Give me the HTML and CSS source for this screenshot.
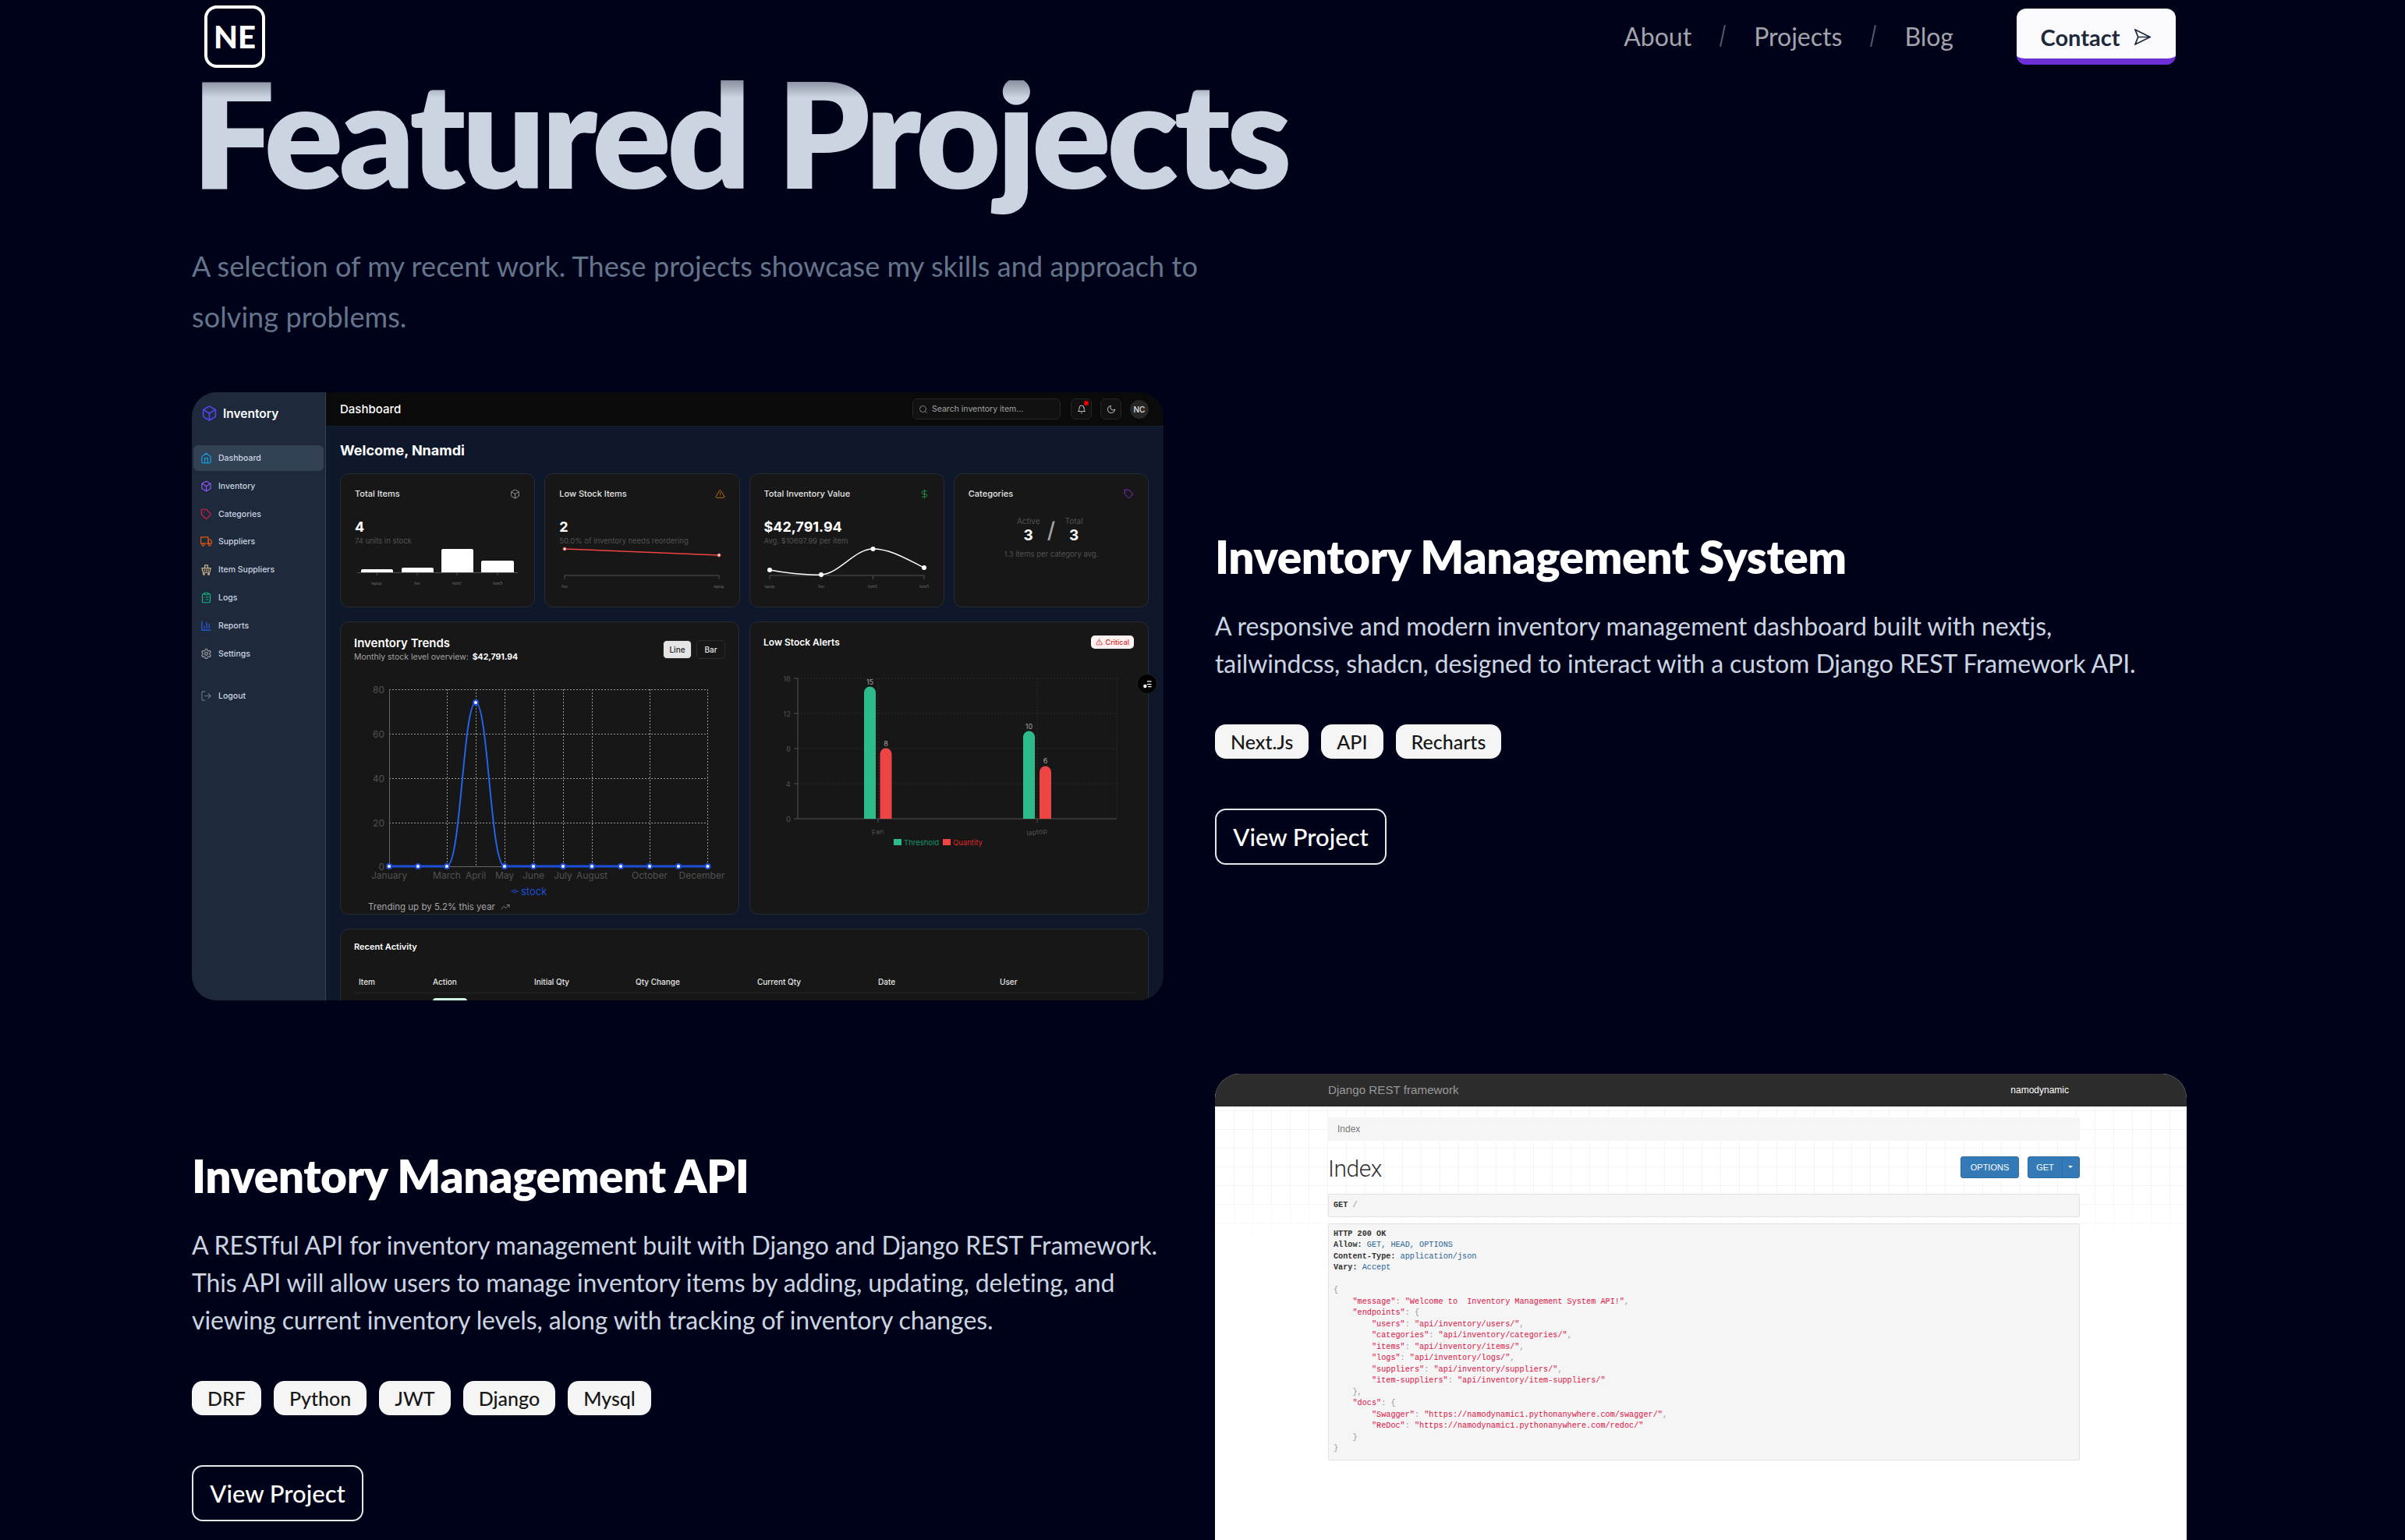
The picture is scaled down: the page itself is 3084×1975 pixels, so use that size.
FILE: index.html
```html
<!DOCTYPE html>
<html lang="en">
<head>
    <meta charset="UTF-8">
    <meta name="viewport" content="width=device-width, initial-scale=1.0">
    <title>Featured Projects</title>
    <link rel="stylesheet" href="styles.css">
</head>
<body>
    <svg class="sprite" width="0" height="0">
        <symbol id="i-home" viewBox="0 0 24 24"><path d="M3 9l9-7 9 7v11a2 2 0 0 1-2 2H5a2 2 0 0 1-2-2z"/><path d="M9 22V12h6v10"/></symbol>
        <symbol id="i-box" viewBox="0 0 24 24"><path d="M21 16V8a2 2 0 0 0-1-1.73l-7-4a2 2 0 0 0-2 0l-7 4A2 2 0 0 0 3 8v8a2 2 0 0 0 1 1.73l7 4a2 2 0 0 0 2 0l7-4A2 2 0 0 0 21 16z"/><path d="M3.27 6.96 12 12.01l8.73-5.05"/><path d="M12 22.08V12"/></symbol>
        <symbol id="i-tag" viewBox="0 0 24 24"><path d="M20.59 13.41l-7.17 7.17a2 2 0 0 1-2.83 0L2 12V2h10l8.59 8.59a2 2 0 0 1 0 2.82z"/><path d="M7 7h.01"/></symbol>
        <symbol id="i-truck" viewBox="0 0 24 24"><path d="M1 3h15v13H1z"/><path d="M16 8h4l3 3v5h-7z"/><circle cx="5.5" cy="18.5" r="2.5"/><circle cx="18.5" cy="18.5" r="2.5"/></symbol>
        <symbol id="i-basket" viewBox="0 0 24 24"><path d="M3 9h18l-2 9H5z"/><path d="M9 9V3h6v6"/><path d="M8 12v3M12 12v3M16 12v3"/><circle cx="7" cy="21" r="1.5"/><circle cx="17" cy="21" r="1.5"/></symbol>
        <symbol id="i-clip" viewBox="0 0 24 24"><rect x="8" y="2" width="8" height="4" rx="1"/><path d="M16 4h2a2 2 0 0 1 2 2v14a2 2 0 0 1-2 2H6a2 2 0 0 1-2-2V6a2 2 0 0 1 2-2h2"/><path d="M12 11h4M12 16h4M8 11h.01M8 16h.01"/></symbol>
        <symbol id="i-chart" viewBox="0 0 24 24"><path d="M3 3v18h18"/><path d="M8 17v-4M13 17V5M18 17V8"/></symbol>
        <symbol id="i-gear" viewBox="0 0 24 24"><path d="M12.22 2h-.44a2 2 0 0 0-2 2v.18a2 2 0 0 1-1 1.73l-.43.25a2 2 0 0 1-2 0l-.15-.08a2 2 0 0 0-2.73.73l-.22.38a2 2 0 0 0 .73 2.73l.15.1a2 2 0 0 1 1 1.72v.51a2 2 0 0 1-1 1.74l-.15.09a2 2 0 0 0-.73 2.73l.22.38a2 2 0 0 0 2.73.73l.15-.08a2 2 0 0 1 2 0l.43.25a2 2 0 0 1 1 1.73V20a2 2 0 0 0 2 2h.44a2 2 0 0 0 2-2v-.18a2 2 0 0 1 1-1.73l.43-.25a2 2 0 0 1 2 0l.15.08a2 2 0 0 0 2.73-.73l.22-.39a2 2 0 0 0-.73-2.73l-.15-.08a2 2 0 0 1-1-1.74v-.5a2 2 0 0 1 1-1.74l.15-.09a2 2 0 0 0 .73-2.73l-.22-.38a2 2 0 0 0-2.73-.73l-.15.08a2 2 0 0 1-2 0l-.43-.25a2 2 0 0 1-1-1.73V4a2 2 0 0 0-2-2z"/><circle cx="12" cy="12" r="3"/></symbol>
        <symbol id="i-logout" viewBox="0 0 24 24"><path d="M9 21H5a2 2 0 0 1-2-2V5a2 2 0 0 1 2-2h4"/><path d="M16 17l5-5-5-5"/><path d="M21 12H9"/></symbol>
        <symbol id="i-bell" viewBox="0 0 24 24"><path d="M18 8A6 6 0 0 0 6 8c0 7-3 9-3 9h18s-3-2-3-9"/><path d="M13.73 21a2 2 0 0 1-3.46 0"/></symbol>
        <symbol id="i-moon" viewBox="0 0 24 24"><path d="M21 12.79A9 9 0 1 1 11.21 3 7 7 0 0 0 21 12.79z"/></symbol>
        <symbol id="i-search" viewBox="0 0 24 24"><circle cx="11" cy="11" r="8"/><path d="m21 21-4.35-4.35"/></symbol>
        <symbol id="i-dollar" viewBox="0 0 24 24"><path d="M12 2v20"/><path d="M17 5H9.5a3.5 3.5 0 0 0 0 7h5a3.5 3.5 0 0 1 0 7H6"/></symbol>
        <symbol id="i-alert" viewBox="0 0 24 24"><path d="m21.73 18-8-14a2 2 0 0 0-3.48 0l-8 14A2 2 0 0 0 4 21h16a2 2 0 0 0 1.73-3Z"/><path d="M12 9v4M12 17h.01"/></symbol>
        <symbol id="i-send" viewBox="0 0 24 24"><path d="M2 2l20 10L2 22l4-10z"/><path d="M6 12h16"/></symbol>
        <symbol id="i-trend" viewBox="0 0 24 24"><path d="m22 7-8.5 8.5-5-5L2 17"/><path d="M16 7h6v6"/></symbol>
    </svg>

    <header class="topbar">
        <a class="logo">NE</a>
        <nav class="toplinks">
            <a>About</a><span class="slash"></span>
            <a>Projects</a><span class="slash"></span>
            <a>Blog</a>
        </nav>
        <a class="contact">Contact <svg class="ico contact-ico"><use href="#i-send"/></svg></a>
    </header>

    <main class="page">
        <h1 class="page-title">Featured Projects</h1>
        <p class="page-lead">A selection of my recent work. These projects showcase my skills and approach to solving problems.</p>

        <section class="project">
            <div class="shot dash">
                <aside class="side">
                    <div class="side-brand"><svg class="ico brand-ico"><use href="#i-box"/></svg>Inventory</div>
                    <a class="side-link active"><svg class="ico c-sky"><use href="#i-home"/></svg>Dashboard</a>
                    <a class="side-link"><svg class="ico c-violet"><use href="#i-box"/></svg>Inventory</a>
                    <a class="side-link"><svg class="ico c-rose"><use href="#i-tag"/></svg>Categories</a>
                    <a class="side-link"><svg class="ico c-orange"><use href="#i-truck"/></svg>Suppliers</a>
                    <a class="side-link"><svg class="ico c-tan"><use href="#i-basket"/></svg>Item Suppliers</a>
                    <a class="side-link"><svg class="ico c-green"><use href="#i-clip"/></svg>Logs</a>
                    <a class="side-link"><svg class="ico c-blue"><use href="#i-chart"/></svg>Reports</a>
                    <a class="side-link"><svg class="ico c-grey"><use href="#i-gear"/></svg>Settings</a>
                    <a class="side-link logout"><svg class="ico c-dim"><use href="#i-logout"/></svg>Logout</a>
                </aside>
                <div class="dash-main">
                    <div class="dash-head">
                        <span class="dash-head-title">Dashboard</span>
                        <div class="dash-search"><svg class="ico"><use href="#i-search"/></svg>Search inventory item...</div>
                        <span class="dash-btn bell"><svg class="ico"><use href="#i-bell"/></svg></span>
                        <span class="dash-btn"><svg class="ico"><use href="#i-moon"/></svg></span>
                        <span class="avatar">NC</span>
                    </div>
                    <div class="dash-body">
                        <h3 class="welcome">Welcome, Nnamdi</h3>
                        <div class="stats">
                            <div class="card stat">
                                <div class="stat-head"><span>Total Items</span><svg class="ico c-grey"><use href="#i-box"/></svg></div>
                                <div class="stat-num">4</div>
                                <div class="stat-sub">74 units in stock</div>
                                <svg class="spark" width="250" height="60">
                                    <path d="M27 34v-2a2 2 0 0 1 2-2h37a2 2 0 0 1 2 2v2zM79 34v-4a2 2 0 0 1 2-2h37a2 2 0 0 1 2 2v4zM130 34V6a2 2 0 0 1 2-2h37a2 2 0 0 1 2 2v28zM181 34V21a2 2 0 0 1 2-2h38a2 2 0 0 1 2 2v13z" fill="#fff"/>
                                    <path d="M22 34.5h206M47.5 34v4M99 34v4M150 34v4M202 34v4" stroke="#525252"/>
                                    <g class="tiny"><text x="47" y="50">laptop</text><text x="99" y="50">Fan</text><text x="150" y="50">Item2</text><text x="202" y="50">Item3</text></g>
                                </svg>
                            </div>
                            <div class="card stat">
                                <div class="stat-head"><span>Low Stock Items</span><svg class="ico c-amber"><use href="#i-alert"/></svg></div>
                                <div class="stat-num">2</div>
                                <div class="stat-sub">50.0% of inventory needs reordering</div>
                                <svg class="spark" width="250" height="60">
                                    <path d="M26 4L224 12" stroke="#ef4444" stroke-width="1.5" fill="none"/>
                                    <circle cx="26" cy="4" r="2" fill="#fff" stroke="#ef4444"/><circle cx="224" cy="12" r="2" fill="#fff" stroke="#ef4444"/>
                                    <path d="M26 43v-5h198v5" stroke="#525252" fill="none"/>
                                    <g class="tiny"><text x="26" y="54">Fan</text><text x="224" y="54">laptop</text></g>
                                </svg>
                            </div>
                            <div class="card stat">
                                <div class="stat-head"><span>Total Inventory Value</span><svg class="ico c-green2"><use href="#i-dollar"/></svg></div>
                                <div class="stat-num">$42,791.94</div>
                                <div class="stat-sub">Avg. $10697.99 per item</div>
                                <svg class="spark" width="250" height="60">
                                    <path d="M26 43v-5h198v5M92 38v5M158.500 38v5" stroke="#525252" fill="none"/>
                                    <path d="M26 31C48 35 70 38 92 37C115 36 135 4 158.500 4C182 4 203 18 224 28" stroke="#fff" stroke-width="1.500" fill="none"/>
                                    <circle cx="26" cy="31" r="3" fill="#fff"/><circle cx="92" cy="37" r="3" fill="#fff"/><circle cx="158.500" cy="4" r="3" fill="#fff"/><circle cx="224" cy="28" r="3" fill="#fff"/>
                                    <g class="tiny"><text x="26" y="54">laptop</text><text x="92" y="54">Fan</text><text x="158" y="54">Item2</text><text x="224" y="54">Item3</text></g>
                                </svg>
                            </div>
                            <div class="card stat">
                                <div class="stat-head"><span>Categories</span><svg class="ico c-purple"><use href="#i-tag"/></svg></div>
                                <div class="cat-row">
                                    <div class="cat-col"><span>Active</span><b>3</b></div>
                                    <i class="cat-slash">/</i>
                                    <div class="cat-col"><span>Total</span><b>3</b></div>
                                </div>
                                <div class="cat-note">1.3 items per category avg.</div>
                            </div>
                        </div>
                        <div class="charts">
                            <div class="card chart">
                                <div class="trend-head">
                                    <div>
                                        <div class="chart-title">Inventory Trends</div>
                                        <div class="chart-sub">Monthly stock level overview: <b>$42,791.94</b></div>
                                    </div>
                                    <div class="toggle"><span class="on">Line</span><span>Bar</span></div>
                                </div>
                                <svg class="trend-svg" width="510" height="300">
                                    <g class="grid-major">
                                        <path d="M63 14.500H471.500M63 71.500H471.500M63 128.500H471.500M63 185.500H471.500"/>
                                        <path d="M137.500 14V241M174.500 14V241M211.500 14V241M248.500 14V241M286.500 14V241M323.500 14V241M397.500 14V241M471.500 14V241"/>
                                    </g>
                                    <path d="M63.500 14V241.500H471.500" stroke="#666" fill="none"/>
                                    <g class="axis-y"><text x="57" y="19">80</text><text x="57" y="76">60</text><text x="57" y="133">40</text><text x="57" y="190">20</text><text x="57" y="246">0</text></g>
                                    <g class="axis-x"><text x="63" y="257">January</text><text x="137" y="257">March</text><text x="174" y="257">April</text><text x="211" y="257">May</text><text x="248" y="257">June</text><text x="286" y="257">July</text><text x="323" y="257">August</text><text x="397" y="257">October</text><text x="464" y="257">December</text></g>
                                    <path d="M137 241C155 241 158 31 174 31C190 31 193 241 211 241" stroke="#2563eb" stroke-width="2" fill="none"/>
                                    <path d="M63 241H137M211 241H471.500" stroke="#1d4ed8" stroke-width="3" fill="none"/>
                                    <g fill="#fff" stroke="#1d4ed8" stroke-width="2">
                                        <circle cx="63" cy="241" r="3"/><circle cx="100" cy="241" r="3"/><circle cx="137" cy="241" r="3"/><circle cx="174" cy="31" r="3"/><circle cx="211" cy="241" r="3"/><circle cx="248" cy="241" r="3"/><circle cx="286" cy="241" r="3"/><circle cx="323" cy="241" r="3"/><circle cx="360" cy="241" r="3"/><circle cx="397" cy="241" r="3"/><circle cx="434" cy="241" r="3"/><circle cx="471.500" cy="241" r="3"/>
                                    </g>
                                    <path d="M219 273h10" stroke="#1d4ed8"/><circle cx="224" cy="273" r="2" fill="#171717" stroke="#1d4ed8"/>
                                    <text class="legend-blue" x="232" y="278">stock</text>
                                </svg>
                                <div class="trend-foot">Trending up by 5.2% this year <svg class="ico"><use href="#i-trend"/></svg></div>
                            </div>
                            <div class="card chart">
                                <div class="alert-head">
                                    <div class="chart-title small">Low Stock Alerts</div>
                                    <span class="badge"><svg class="ico"><use href="#i-alert"/></svg>Critical</span>
                                </div>
                                <svg class="alert-svg" width="509" height="260">
                                    <path class="grid-minor" d="M62 19H471M62 64H471M62 109H471M62 154H471M165 19V199M369 19V199M471 19V199"/>
                                    <path d="M62 19V199H471M57 19H62M57 64H62M57 109H62M57 154H62M57 199H62M165 199V204M369 199V204" stroke="#525252" fill="none"/>
                                    <path d="M147 199V37a7 7 0 0 1 15 0V199zM351 199V94a7 7 0 0 1 15 0V199z" fill="#2ebb8b"/>
                                    <path d="M167.500 199V116a7 7 0 0 1 15 0V199zM372 199V139a7 7 0 0 1 15 0V199z" fill="#ef4444"/>
                                    <g class="bar-y"><text x="53" y="23">16</text><text x="53" y="68">12</text><text x="53" y="113">8</text><text x="53" y="158">4</text><text x="53" y="203">0</text></g>
                                    <g class="bar-val"><text x="154.500" y="27">15</text><text x="175" y="106">8</text><text x="358.500" y="84">10</text><text x="379.500" y="128">6</text></g>
                                    <text class="bar-x" x="165" y="219" transform="rotate(-8 165 219)">Fan</text>
                                    <text class="bar-x" x="369" y="219" transform="rotate(-8 369 219)">laptop</text>
                                    <rect x="185" y="225" width="10" height="8" fill="#2ebb8b"/><text class="leg-g" x="198" y="233">Threshold</text>
                                    <rect x="248" y="225" width="10" height="8" fill="#ef4444"/><text class="leg-r" x="261" y="233">Quantity</text>
                                </svg>
                            </div>
                        </div>
                        <div class="card activity">
                            <div class="activity-title">Recent Activity</div>
                            <div class="activity-cols"><span>Item</span><span>Action</span><span>Initial Qty</span><span>Qty Change</span><span>Current Qty</span><span>Date</span><span>User</span></div>
                            <div class="activity-row"><span></span><span class="activity-pill"></span></div>
                        </div>
                    </div>
                    <span class="float-btn"><svg viewBox="0 0 24 24"><path d="M11 6h9M11 12h9M13 17h7"/><circle cx="7" cy="16" r="2.500" fill="#fff"/></svg></span>
                </div>
            </div>
            <div class="info">
                <h2>Inventory Management System</h2>
                <p>A responsive and modern inventory management dashboard built with nextjs,<br>tailwindcss, shadcn, designed to interact with a custom Django REST Framework API.</p>
                <div class="tags"><span>Next.Js</span><span>API</span><span>Recharts</span></div>
                <a class="view-btn">View Project</a>
            </div>
        </section>

        <section class="project">
            <div class="info">
                <h2>Inventory Management API</h2>
                <p>A RESTful API for inventory management built with Django and Django REST Framework. This API will allow users to manage inventory items by adding, updating, deleting, and viewing current inventory levels, along with tracking of inventory changes.</p>
                <div class="tags"><span>DRF</span><span>Python</span><span>JWT</span><span>Django</span><span>Mysql</span></div>
                <a class="view-btn">View Project</a>
            </div>
            <div class="shot api">
                <div class="api-nav"><span>Django REST framework</span><span class="api-user">namodynamic</span></div>
                <div class="api-body">
                    <div class="api-crumb">Index</div>
                    <div class="api-title-row">
                        <span class="api-title">Index</span>
                        <span class="api-btn">OPTIONS</span>
                        <span class="api-btn get"><span>GET</span><i></i></span>
                    </div>
                    <div class="api-req"><b>GET</b> <em>/</em></div>
                    <pre class="api-res"><b>HTTP 200 OK</b>
<b>Allow:</b> <span class="lit">GET, HEAD, OPTIONS</span>
<b>Content-Type:</b> <span class="lit">application/json</span>
<b>Vary:</b> <span class="lit">Accept</span>

<em>{</em>
    <span class="str">"message"</span><em>:</em> <span class="str">"Welcome to  Inventory Management System API!"</span><em>,</em>
    <span class="str">"endpoints"</span><em>: {</em>
        <span class="str">"users"</span><em>:</em> <span class="str">"api/inventory/users/"</span><em>,</em>
        <span class="str">"categories"</span><em>:</em> <span class="str">"api/inventory/categories/"</span><em>,</em>
        <span class="str">"items"</span><em>:</em> <span class="str">"api/inventory/items/"</span><em>,</em>
        <span class="str">"logs"</span><em>:</em> <span class="str">"api/inventory/logs/"</span><em>,</em>
        <span class="str">"suppliers"</span><em>:</em> <span class="str">"api/inventory/suppliers/"</span><em>,</em>
        <span class="str">"item-suppliers"</span><em>:</em> <span class="str">"api/inventory/item-suppliers/"</span>
    <em>},</em>
    <span class="str">"docs"</span><em>: {</em>
        <span class="str">"Swagger"</span><em>:</em> <span class="str">"https://namodynamic1.pythonanywhere.com/swagger/"</span><em>,</em>
        <span class="str">"ReDoc"</span><em>:</em> <span class="str">"https://namodynamic1.pythonanywhere.com/redoc/"</span>
    <em>}</em>
<em>}</em></pre>
                </div>
            </div>
        </section>
    </main>
</body>
</html>
```

FILE: styles.css
```css
* {
    box-sizing: border-box;
}
html, body {
    margin: 0;
    height: 1975px;
    overflow: hidden;
}
body {
    background: #00021a;
    color: #fff;
    font-family: "Lato", sans-serif;
    position: relative;
}
.sprite {
    position: absolute;
}
.ico {
    width: 14px;
    height: 14px;
    fill: none;
    stroke: currentColor;
    stroke-width: 2;
    stroke-linecap: round;
    stroke-linejoin: round;
    flex: none;
}

/* top bar */
.topbar {
    position: absolute;
    top: 0;
    left: 0;
    right: 0;
    height: 103px;
    background: #00021a;
    z-index: 5;
    display: flex;
    align-items: flex-start;
    padding: 0 294px 0 262px;
}
.topbar::after {
    content: "";
    position: absolute;
    top: 100%;
    left: 0;
    right: 0;
    height: 22px;
    background: linear-gradient(#00021a55, #00021a00);
}
.logo {
    width: 78px;
    height: 80px;
    margin-top: 7px;
    border: 4px solid #fff;
    border-radius: 16px;
    display: flex;
    align-items: center;
    justify-content: center;
    font-size: 40px;
    font-weight: 900;
}
.toplinks {
    margin-left: auto;
    display: flex;
    align-items: center;
    height: 92px;
    font-size: 32px;
    color: #a3a3ad;
}
.slash {
    width: 2px;
    height: 28px;
    margin: 0 39px;
    background: #55586a;
    transform: rotate(12deg);
}
.contact {
    margin: 11px 0 0 81px;
    width: 204px;
    height: 72px;
    padding-top: 8px;
    background: #fafafc;
    border-bottom: 8px solid #6d2fd6;
    border-radius: 12px;
    color: #1e293b;
    font-size: 29px;
    font-weight: 700;
    display: flex;
    align-items: center;
    justify-content: center;
    gap: 18px;
}
.contact-ico {
    width: 23px;
    height: 23px;
    stroke-width: 1.800;
}

/* page */
.page {
    padding: 94px 280px 0 246px;
}
.page-title {
    margin: 0;
    font-size: 188px;
    font-weight: 800;
    line-height: 150px;
    letter-spacing: -5.200px;
    color: #cbd5e1;
}
.page-lead {
    width: 1320px;
    margin: 65px 0 0;
    font-size: 36px;
    line-height: 65px;
    letter-spacing: 0.080px;
    color: #64748b;
}
.project {
    display: grid;
    grid-template-columns: 1246px 1246px;
    gap: 66px;
    align-items: center;
    margin-top: 94px;
}
.project:first-of-type {
    margin-top: 64px;
}
.project + .project {
    align-items: start;
}
.project + .project .shot {
    height: 672px;
}
.project + .project .info {
    margin-top: 95px;
}
.info h2 {
    margin: 0;
    font-size: 58.500px;
    line-height: 71px;
    letter-spacing: -0.400px;
    font-weight: 800;
}
.info p {
    margin: 30px 0 0;
    font-size: 32px;
    line-height: 48px;
    letter-spacing: -0.100px;
    color: #cbd5e1;
}
.tags {
    display: flex;
    gap: 16px;
    margin-top: 54px;
}
.tags span {
    height: 44px;
    padding: 0 20px;
    display: flex;
    align-items: center;
    background: #f5f5f5;
    color: #171717;
    border-radius: 14px;
    font-size: 25px;
    font-weight: 500;
}
.view-btn {
    display: flex;
    align-items: center;
    justify-content: center;
    width: 220px;
    height: 72px;
    margin-top: 64px;
    border: 2px solid #e5e7eb;
    border-radius: 14px;
    font-size: 31px;
    font-weight: 500;
}
.shot {
    overflow: hidden;
    border-radius: 32px;
}

/* inventory dashboard screenshot */
.dash {
    height: 780px;
    display: grid;
    grid-template-columns: 172px minmax(0, 1fr);
    font-family: "Inter", sans-serif;
    background: #0f172a;
}
.side {
    background: #1e293b;
    border-right: 1px solid #334155;
    padding: 0 2px;
    color: #cbd5e1;
}
.side-brand {
    display: flex;
    align-items: center;
    gap: 7px;
    height: 50px;
    margin-top: 2px;
    margin-bottom: 16px;
    padding-left: 10px;
    font-size: 15.500px;
    font-weight: 600;
    color: #fff;
}
.brand-ico {
    width: 21px;
    height: 24px;
    color: #4f46e5;
}
.side-link {
    display: flex;
    align-items: center;
    gap: 8px;
    height: 33px;
    margin-bottom: 2.800px;
    padding-left: 9px;
    border-radius: 6px;
    font-size: 10.500px;
    font-weight: 500;
}
.side-link .ico {
    width: 15px;
    height: 15px;
    stroke-width: 1.800;
}
.side-link.active {
    background: #334155;
}
.side-link.logout {
    margin-top: 21px;
}
.c-sky { color: #0ea5e9; }
.c-violet { color: #8b5cf6; }
.c-rose { color: #e11d48; }
.c-orange { color: #ea580c; }
.c-tan { color: #d6b98c; }
.c-green { color: #10b981; }
.c-blue { color: #2563eb; }
.c-grey { color: #a3a3a3; }
.c-dim { color: #64748b; }
.c-amber { color: #d97706; }
.c-green2 { color: #16a34a; }
.c-purple { color: #9333ea; }

.dash-main {
    position: relative;
    min-width: 0;
}
.dash-head {
    height: 44px;
    background: #0a0a0a;
    border-bottom: 1px solid #171f2e;
    display: flex;
    align-items: center;
    padding-left: 18px;
    color: #e5e5e5;
}
.dash-head-title {
    margin-right: auto;
    font-size: 15px;
    font-weight: 500;
    color: #fff;
}
.dash-search {
    width: 190px;
    height: 27px;
    margin-right: 13px;
    padding-left: 7px;
    display: flex;
    align-items: center;
    gap: 5px;
    border: 1px solid #262626;
    border-radius: 6px;
    background: #111;
    color: #a3a3a3;
    font-size: 10.500px;
}
.dash-search .ico {
    width: 12px;
    height: 12px;
    stroke-width: 1.500;
}
.dash-btn {
    position: relative;
    width: 27px;
    height: 27px;
    margin-right: 11px;
    border: 1px solid #262626;
    border-radius: 6px;
    background: #111;
    display: flex;
    align-items: center;
    justify-content: center;
}
.dash-btn .ico {
    width: 12px;
    height: 12px;
    stroke-width: 1.700;
}
.bell::after {
    content: "";
    position: absolute;
    top: 2px;
    right: 3px;
    width: 6px;
    height: 6px;
    border-radius: 50%;
    background: #ef0000;
}
.avatar {
    width: 24px;
    height: 24px;
    margin-right: 19px;
    border-radius: 50%;
    background: #262626;
    display: flex;
    align-items: center;
    justify-content: center;
    font-size: 10px;
    font-weight: 500;
}
.dash-body {
    padding: 0 19px 0 18px;
}
.welcome {
    margin: 0;
    height: 60px;
    line-height: 62px;
    font-size: 18px;
    font-weight: 700;
}
.card {
    background: #171717;
    border: 1px solid #252a33;
    border-radius: 11px;
}
.stats {
    display: grid;
    grid-template-columns: repeat(4, minmax(0, 1fr));
    gap: 12px;
}
.stat {
    height: 172px;
    padding: 18px 18px;
}
.stat-head {
    display: flex;
    justify-content: space-between;
    align-items: center;
    height: 14px;
    font-size: 11px;
    font-weight: 500;
    color: #e5e5e5;
}
.stat-head .ico {
    width: 13px;
    height: 13px;
    stroke-width: 1.600;
}
.stat-num {
    margin-top: 25px;
    font-size: 18px;
    line-height: 22px;
    font-weight: 700;
}
.stat-sub {
    font-size: 9.500px;
    line-height: 14px;
    color: #525252;
}
.spark {
    display: block;
    margin: -1px 0 0 -19px;
    overflow: visible;
}
.tiny text {
    font-size: 4.500px;
    fill: #737373;
    text-anchor: middle;
}
.cat-row {
    display: flex;
    justify-content: center;
    gap: 5px;
    margin-top: 21px;
}
.cat-col {
    display: flex;
    flex-direction: column;
    align-items: center;
    width: 38px;
}
.cat-col span {
    font-size: 10px;
    line-height: 14px;
    color: #525252;
}
.cat-col b {
    font-size: 19px;
    line-height: 24px;
}
.cat-slash {
    align-self: center;
    font-size: 28px;
    font-weight: 500;
    font-style: normal;
    color: #a3a3a3;
}
.cat-note {
    margin-top: 6px;
    text-align: center;
    font-size: 9.500px;
    color: #525252;
}
.charts {
    display: grid;
    grid-template-columns: repeat(2, minmax(0, 1fr));
    gap: 13px;
    margin-top: 18px;
}
.chart {
    height: 376px;
    position: relative;
}
.trend-head {
    display: flex;
    justify-content: space-between;
    padding: 17px 17px 0 17px;
    height: 72px;
}
.chart-title {
    font-size: 15px;
    line-height: 20px;
    font-weight: 600;
}
.chart-title.small {
    font-size: 12px;
}
.chart-sub {
    font-size: 10.500px;
    line-height: 16px;
    color: #a3a3a3;
}
.chart-sub b {
    margin-left: 2px;
    color: #fff;
}
.toggle {
    display: flex;
    gap: 6px;
    margin-top: 6px;
    height: 24px;
}
.toggle span {
    width: 37px;
    border: 1px solid #2a2a2a;
    border-radius: 5px;
    display: flex;
    align-items: center;
    justify-content: center;
    font-size: 10px;
    font-weight: 500;
    color: #e5e5e5;
}
.toggle .on {
    background: #e5e5e5;
    color: #262626;
}
.trend-svg {
    display: block;
    margin-left: -1px;
    overflow: visible;
}
.grid-major path {
    stroke: #9a9a9a;
    stroke-dasharray: 2 2;
    fill: none;
}
.axis-y text {
    font-size: 12px;
    fill: #525252;
    text-anchor: end;
}
.axis-x text {
    font-size: 12px;
    fill: #525252;
    text-anchor: middle;
}
.legend-blue {
    font-size: 13px;
    fill: #1d4ed8;
}
.trend-foot {
    position: absolute;
    left: 35px;
    top: 358px;
    display: flex;
    align-items: center;
    gap: 7px;
    font-size: 11.500px;
    color: #a3a3a3;
}
.trend-foot .ico {
    width: 12px;
    height: 12px;
    stroke-width: 1.500;
}
.alert-head {
    display: flex;
    justify-content: space-between;
    align-items: flex-start;
    padding: 17px 18px 0 17px;
    height: 53px;
}
.alert-head .chart-title {
    line-height: 17px;
}
.badge {
    display: flex;
    align-items: center;
    gap: 4px;
    height: 17px;
    padding: 0 6px;
    background: #fef2f2;
    border-radius: 5px;
    color: #dc2626;
    font-size: 9px;
    font-weight: 500;
}
.badge .ico {
    width: 9px;
    height: 9px;
}
.alert-svg {
    display: block;
    margin-left: -1px;
    overflow: visible;
}
.grid-minor {
    stroke: #2c2c2c;
    stroke-dasharray: 2 2;
    fill: none;
}
.bar-y text {
    font-size: 9.500px;
    fill: #525252;
    text-anchor: end;
}
.bar-val text {
    font-size: 9px;
    fill: #a3a3a3;
    text-anchor: middle;
}
.bar-x {
    font-size: 9px;
    fill: #525252;
    text-anchor: middle;
}
.leg-g {
    font-size: 9.500px;
    fill: #15936a;
}
.leg-r {
    font-size: 9.500px;
    fill: #dc2626;
}
.activity {
    height: 120px;
    margin-top: 18px;
    padding: 0 17px;
}
.activity-title {
    height: 24px;
    margin-top: 10px;
    line-height: 24px;
    font-size: 11px;
    font-weight: 600;
}
.activity-cols,
.activity-row {
    display: grid;
    grid-template-columns: 95px 130px 130px 156px 155px 156px 1fr;
    padding-left: 6px;
}
.activity-cols {
    height: 48px;
    padding-top: 25px;
    line-height: 16px;
    border-bottom: 1px solid #262626;
    font-size: 10px;
    font-weight: 500;
    color: #e5e5e5;
}
.activity-row {
    padding-top: 6px;
}
.activity-pill {
    width: 44px;
    height: 10px;
    background: #d1fae5;
    border-radius: 4px;
}
.float-btn {
    position: absolute;
    top: 361px;
    right: 8px;
    width: 26px;
    height: 26px;
    border-radius: 50%;
    background: #000;
    border: 1px solid #222;
    display: flex;
    align-items: center;
    justify-content: center;
}
.float-btn svg {
    width: 15px;
    height: 15px;
    fill: none;
    stroke: #fff;
    stroke-width: 2;
}

/* django rest framework screenshot */
.api {
    background: #fff;
    font-family: "Liberation Sans", sans-serif;
    color: #333;
}
.api-nav {
    height: 42px;
    background: #2c2c2c;
    border-bottom: 1px solid #222;
    padding: 0 151px 0 145px;
    display: flex;
    align-items: center;
    justify-content: space-between;
    font-size: 15.200px;
    color: #999;
}
.api-user {
    font-size: 12px;
    color: #fff;
}
.api-body {
    padding: 14px 137px 0 145px;
    background:
        linear-gradient(#fff0 0, #fff0 110px, #fff 180px),
        repeating-linear-gradient(90deg, #f4f4f4 0 1px, #fff0 1px 24px),
        repeating-linear-gradient(0deg, #f4f4f4 0 1px, #fff0 1px 24px);
    height: 630px;
}
.api-crumb {
    height: 30px;
    padding-left: 12px;
    background: #f5f5f5;
    font-size: 12px;
    line-height: 30px;
    color: #777;
}
.api-title-row {
    display: flex;
    align-items: center;
    gap: 11px;
    height: 67.500px;
}
.api-title {
    margin: 4px auto 0 0;
    font-family: "Roboto", sans-serif;
    font-size: 30px;
    font-weight: 300;
    letter-spacing: -0.5px;
    color: #333;
}
.api-btn {
    width: 75px;
    height: 28px;
    display: flex;
    align-items: center;
    justify-content: center;
    background: #337ab7;
    border: 1px solid #2e6da4;
    border-radius: 3px;
    color: #fff;
    font-size: 11px;
}
.api-btn.get {
    width: 67px;
    justify-content: flex-start;
}
.api-btn.get span {
    width: 44px;
    height: 100%;
    display: flex;
    align-items: center;
    justify-content: center;
    border-right: 1px solid #2e6da4;
}
.api-btn.get i {
    margin-left: 7px;
    border: 3px solid transparent;
    border-top-color: #fff;
    border-bottom: 0;
}
.api-req,
.api-res {
    margin: 0;
    background: #f5f5f5;
    border: 1px solid #e3e3e3;
    border-radius: 2px;
    font-family: "Liberation Mono", monospace;
    font-size: 10.200px;
    color: #333;
}
.api-req {
    height: 30px;
    padding-left: 6px;
    line-height: 28px;
}
.api-req em,
.api-res em {
    font-style: normal;
    color: #999;
}
.api-res {
    height: 304px;
    margin-top: 8px;
    padding: 6px 6px 0;
    line-height: 14.500px;
}
.lit {
    color: #2a6496;
}
.str {
    color: #dd1144;
}
```
